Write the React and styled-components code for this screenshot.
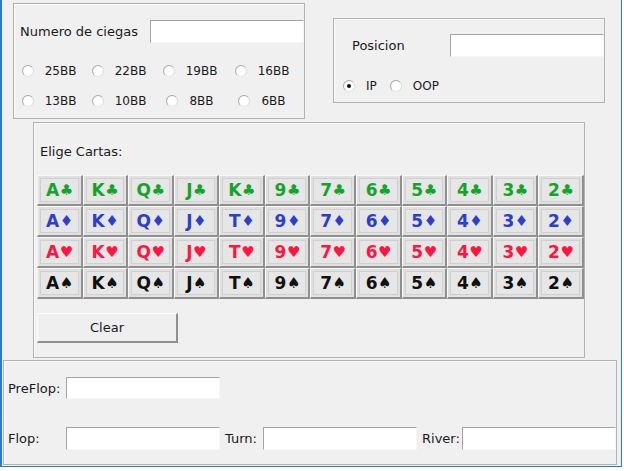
import React from "react";
import styled, { createGlobalStyle } from "styled-components";

const Global = createGlobalStyle`
  html, body {
    margin: 0;
    padding: 0;
    background: #ffffff;
  }
  body {
    font-family: "DejaVu Sans", "Liberation Sans", sans-serif;
    font-size: 13px;
    color: #1a1a1a;
  }
`;

// -- window frame
const Window = styled.div`
  box-sizing: border-box;
  width: 622px;
  height: 467px;
  background: #f0f0f0;
  border-left: 2px solid #2a7ad2;
  border-right: 1px solid #2a7ad2;
  border-bottom: 1px solid #2a7ad2;
  display: flex;
  flex-direction: column;
`;

const Panel = styled.div`
  box-sizing: border-box;
  width: ${(p) => p.$w}px;
  height: ${(p) => p.$h}px;
  border: 1px solid #b2b2b2;
  box-shadow: inset 1px 1px 0 #fbfbfb;
  display: flex;
  flex-direction: column;
`;

const TopRow = styled.div`
  display: flex;
  align-items: flex-start;
  padding: 3px 0 0 11px;
`;

const RightPanel = styled(Panel)`
  margin: 15px 0 0 28px;
`;

const FieldRow = styled.div`
  display: flex;
  align-items: center;
  justify-content: space-between;
  padding: ${(p) => p.$pad};
`;

const Label = styled.span`
  white-space: nowrap;
  width: ${(p) => (p.$w ? `${p.$w}px` : "auto")};
  margin-left: ${(p) => p.$ml || 0}px;
  flex: none;
`;

const Field = styled.div`
  box-sizing: border-box;
  width: ${(p) => p.$w || 154}px;
  height: ${(p) => p.$h || 23}px;
  background: #fff;
  border: 1px solid;
  border-color: #a3a3a3 #f6f6f6 #f6f6f6 #a3a3a3;
  flex: none;
`;

// -- radio buttons
const RadioGrid = styled.div`
  display: grid;
  grid-template-columns: 70px 70px 72px 72px;
  grid-auto-rows: 30px;
  margin: 13px 0 0 0;
`;

const RadioItem = styled.label`
  display: flex;
  align-items: center;
  justify-self: center;
  gap: 11px;
  font-size: 12px;
`;

const Circle = styled.span`
  box-sizing: border-box;
  width: 12px;
  height: 12px;
  border-radius: 50%;
  border: 1px solid;
  border-color: #a8a8a8 #dcdcdc #e6e6e6 #acacac;
  background: radial-gradient(circle at 60% 60%, #ffffff 55%, #e8e8e8 100%);
  display: flex;
  align-items: center;
  justify-content: center;
  &::after {
    content: "";
    width: 4px;
    height: 4px;
    border-radius: 50%;
    background: ${(p) => (p.$on ? "#111" : "transparent")};
  }
`;

const PosRadios = styled.div`
  display: flex;
  align-items: center;
  gap: 13px;
  padding: 22px 0 0 9px;
`;

function Radio({ label, on }) {
  return (
    <RadioItem>
      <Circle $on={on} />
      <span>{label}</span>
    </RadioItem>
  );
}

// -- cards
const CardsPanel = styled(Panel)`
  margin: 3px 0 0 31px;
`;

const CardsTitle = styled.div`
  padding: 21px 0 0 6px;
  height: 31px;
`;

const CardGrid = styled.div`
  display: grid;
  grid-template-columns: repeat(12, 1fr);
  grid-auto-rows: 31px;
  width: 547px;
  margin: 0 0 0 3px;
`;

const suitColor = {
  c: "#13a42c",
  d: "#2c3fcc",
  h: "#ff1540",
  s: "#111111",
};

const CardButton = styled.button`
  box-sizing: border-box;
  margin: 0;
  padding: 0 0 1px;
  border-style: solid;
  border-width: 1px 2px 2px 1px;
  border-color: #fafafa #8f8f8f #8f8f8f #fafafa;
  background: #e6e6e6;
  box-shadow: inset 0 0 0 2px #e0e0e0, inset 0 0 0 3px #d0d0d0;
  font-family: "DejaVu Sans", sans-serif;
  font-weight: bold;
  font-size: 17px;
  letter-spacing: -0.5px;
  color: ${(p) => suitColor[p.$suit]};
  display: flex;
  align-items: center;
  justify-content: center;
`;

const Suit = styled.span`
  font-size: 15px;
  margin-left: 1px;
`;

const ClearButton = styled.button`
  box-sizing: border-box;
  width: 141px;
  height: 30px;
  margin: 14px 0 0 3px;
  border-style: solid;
  border-width: 1px 2px 2px 1px;
  border-color: #fdfdfd #909090 #909090 #fdfdfd;
  background: #efefef;
  font-family: "DejaVu Sans", sans-serif;
  font-size: 13px;
  color: #1a1a1a;
`;

// -- streets
const StreetPanel = styled(Panel)`
  margin: 2px 0 0 1px;
  padding-left: 4px;
`;

const StreetRow = styled.div`
  display: flex;
  align-items: center;
  margin-top: ${(p) => p.$top}px;
`;

const ranks = ["A", "K", "Q", "J", "T", "9", "7", "6", "5", "4", "3", "2"];
const clubs = ["A", "K", "Q", "J", "K", "9", "7", "6", "5", "4", "3", "2"];
const glyph = { c: "♣", d: "♦", h: "♥", s: "♠" };

const rows = [
  { suit: "c", list: clubs },
  { suit: "d", list: ranks },
  { suit: "h", list: ranks },
  { suit: "s", list: ranks },
];

function App() {
  return (
    <>
      <Global />
      <Window>
        <TopRow>
          <Panel $w={292} $h={116}>
            <FieldRow $pad="16px 0 0 6px">
              <Label>Numero de ciegas</Label>
              <Field />
            </FieldRow>
            <RadioGrid>
              <Radio label="25BB" />
              <Radio label="22BB" />
              <Radio label="19BB" />
              <Radio label="16BB" />
              <Radio label="13BB" />
              <Radio label="10BB" />
              <Radio label="8BB" />
              <Radio label="6BB" />
            </RadioGrid>
          </Panel>
          <RightPanel $w={272} $h={85}>
            <FieldRow $pad="15px 0 0 18px">
              <Label>Posicion</Label>
              <Field />
            </FieldRow>
            <PosRadios>
              <Radio label="IP" on />
              <Radio label="OOP" />
            </PosRadios>
          </RightPanel>
        </TopRow>

        <CardsPanel $w={552} $h={236}>
          <CardsTitle>Elige Cartas:</CardsTitle>
          <CardGrid>
            {rows.map((r) =>
              r.list.map((rank, i) => (
                <CardButton key={r.suit + i} $suit={r.suit}>
                  {rank}
                  <Suit>{glyph[r.suit]}</Suit>
                </CardButton>
              ))
            )}
          </CardGrid>
          <ClearButton>Clear</ClearButton>
        </CardsPanel>

        <StreetPanel $w={614} $h={105}>
          <StreetRow $top={16}>
            <Label $w={58}>PreFlop:</Label>
            <Field $h={22} />
          </StreetRow>
          <StreetRow $top={28}>
            <Label $w={58}>Flop:</Label>
            <Field />
            <Label $w={38} $ml={5}>Turn:</Label>
            <Field />
            <Label $w={40} $ml={5}>River:</Label>
            <Field />
          </StreetRow>
        </StreetPanel>
      </Window>
    </>
  );
}

export default App;
